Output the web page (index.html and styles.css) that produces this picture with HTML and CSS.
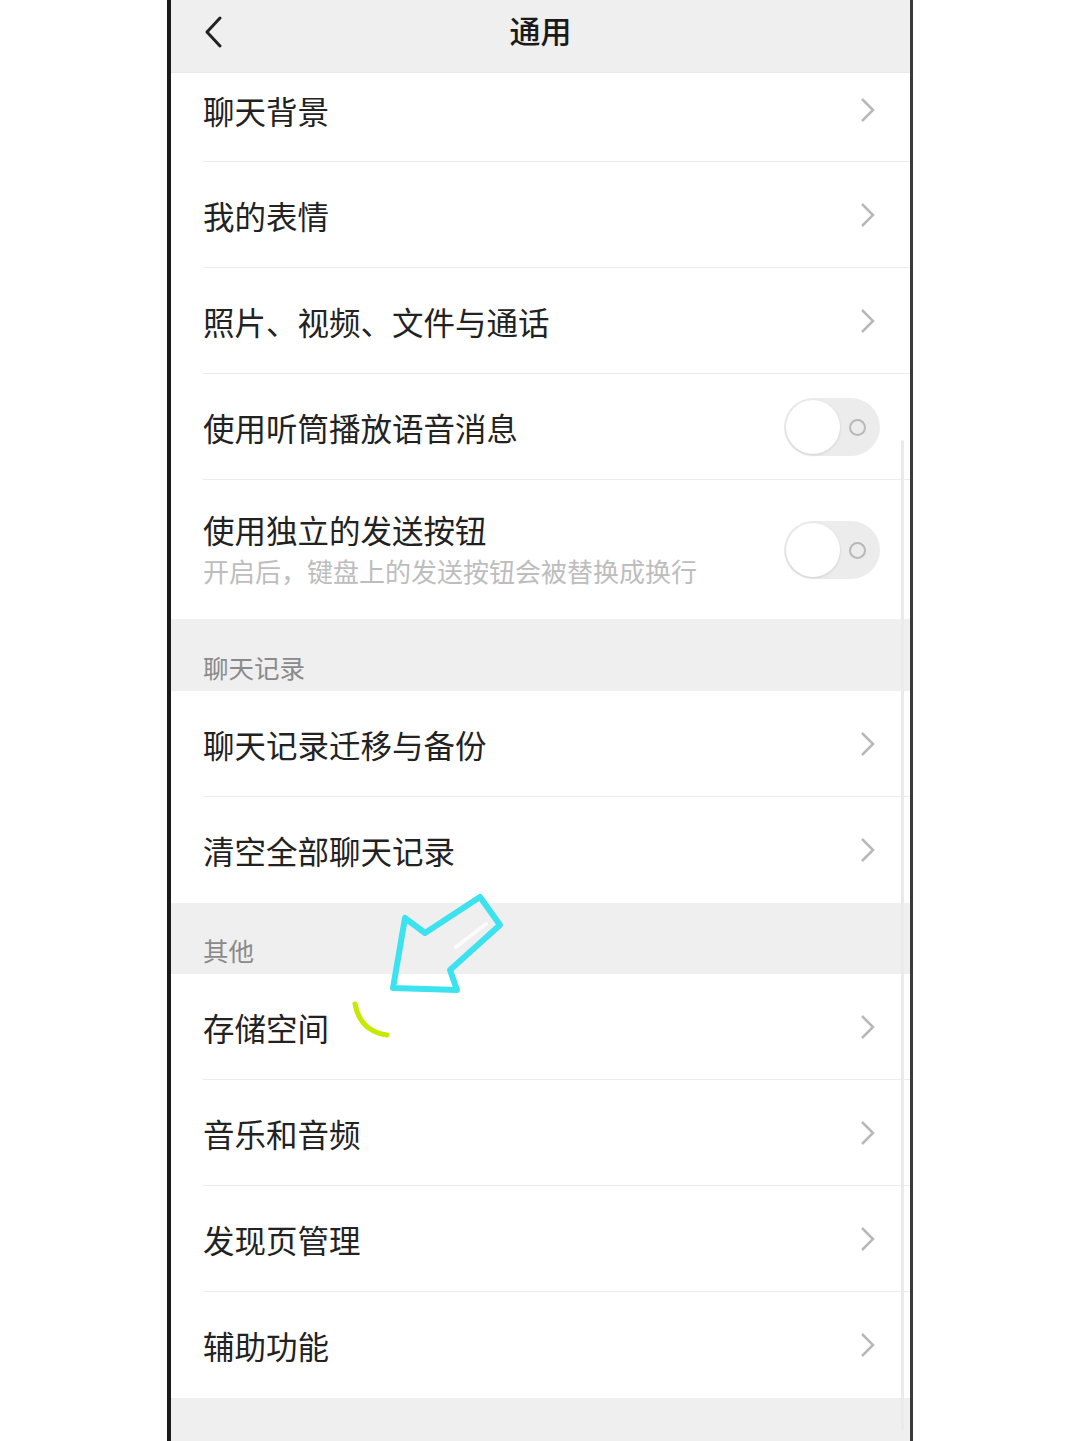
FILE: index.html
```html
<!DOCTYPE html>
<html lang="zh-CN">
<head>
<meta charset="UTF-8">
<meta name="viewport" content="width=device-width, initial-scale=1.0">
<title>通用</title>
<link rel="stylesheet" href="styles.css">
</head>
<body>
  <div class="phone">
    <header class="topbar">
      <svg class="back" width="20" height="32" viewBox="0 0 20 32"><path d="M16 2 L3 16 L16 30" fill="none" stroke="#222" stroke-width="3" stroke-linecap="round" stroke-linejoin="round"/></svg>
      <div class="title">通用</div>
    </header>

    <div class="list">
      <div class="row first"><div class="inner"><span class="label">聊天背景</span><svg class="chev" width="16" height="26" viewBox="0 0 16 26"><path d="M2 2 L13 13 L2 24" fill="none" stroke="#b8b8b8" stroke-width="2.5"/></svg></div></div>
      <div class="row"><div class="inner"><span class="label">我的表情</span><svg class="chev" width="16" height="26" viewBox="0 0 16 26"><path d="M2 2 L13 13 L2 24" fill="none" stroke="#b8b8b8" stroke-width="2.5"/></svg></div></div>
      <div class="row"><div class="inner"><span class="label">照片、视频、文件与通话</span><svg class="chev" width="16" height="26" viewBox="0 0 16 26"><path d="M2 2 L13 13 L2 24" fill="none" stroke="#b8b8b8" stroke-width="2.5"/></svg></div></div>
      <div class="row"><div class="inner"><span class="label">使用听筒播放语音消息</span><div class="toggle"><span class="knob"></span><span class="ring"></span></div></div></div>
      <div class="row tall"><div class="inner last">
        <div class="texts">
          <span class="label">使用独立的发送按钮</span>
          <span class="sub">开启后，键盘上的发送按钮会被替换成换行</span>
        </div>
        <div class="toggle"><span class="knob"></span><span class="ring"></span></div>
      </div></div>
    </div>

    <div class="section">聊天记录</div>
    <div class="list">
      <div class="row"><div class="inner"><span class="label">聊天记录迁移与备份</span><svg class="chev" width="16" height="26" viewBox="0 0 16 26"><path d="M2 2 L13 13 L2 24" fill="none" stroke="#b8b8b8" stroke-width="2.5"/></svg></div></div>
      <div class="row"><div class="inner last"><span class="label">清空全部聊天记录</span><svg class="chev" width="16" height="26" viewBox="0 0 16 26"><path d="M2 2 L13 13 L2 24" fill="none" stroke="#b8b8b8" stroke-width="2.5"/></svg></div></div>
    </div>

    <div class="section short">其他</div>
    <div class="list">
      <div class="row"><div class="inner"><span class="label">存储空间</span><svg class="chev" width="16" height="26" viewBox="0 0 16 26"><path d="M2 2 L13 13 L2 24" fill="none" stroke="#b8b8b8" stroke-width="2.5"/></svg></div></div>
      <div class="row"><div class="inner"><span class="label">音乐和音频</span><svg class="chev" width="16" height="26" viewBox="0 0 16 26"><path d="M2 2 L13 13 L2 24" fill="none" stroke="#b8b8b8" stroke-width="2.5"/></svg></div></div>
      <div class="row"><div class="inner"><span class="label">发现页管理</span><svg class="chev" width="16" height="26" viewBox="0 0 16 26"><path d="M2 2 L13 13 L2 24" fill="none" stroke="#b8b8b8" stroke-width="2.5"/></svg></div></div>
      <div class="row"><div class="inner last"><span class="label">辅助功能</span><svg class="chev" width="16" height="26" viewBox="0 0 16 26"><path d="M2 2 L13 13 L2 24" fill="none" stroke="#b8b8b8" stroke-width="2.5"/></svg></div></div>
    </div>
    <div class="bottom"></div>

    <div class="scrollbar"></div>

    <!-- hand drawn marks on the screenshot -->
    <svg class="marks" width="170" height="160" viewBox="350 885 170 160">
      <path d="M405 918 L393 988 L457 990 L450 970 L500 925 L480 897 L425 933 Z" fill="none" stroke="#3ce3ee" stroke-width="6" stroke-linejoin="round"/>
      <path d="M456 947 L486 924" stroke="#fff" stroke-width="4" stroke-linecap="round" opacity="0.85"/>
      <path d="M355 1004 Q360 1031 387 1035" fill="none" stroke="#c4ea00" stroke-width="5" stroke-linecap="round"/>
    </svg>
  </div>
</body>
</html>
```

FILE: styles.css
```css
body { margin: 0; background: #fff; font-family: "Noto Sans CJK SC", "Noto Sans", sans-serif; color: #1f1f1f; }
.phone { position: relative; width: 739px; height: 1441px; margin: 0 auto; border-left: 4px solid #1a1a1a; border-right: 3px solid #3a3a3a; background: #fff; overflow: hidden; }

.topbar { height: 73px; background: #efefef; border-bottom: 1px solid #e8e8e8; box-sizing: border-box; display: flex; align-items: center; justify-content: center; position: relative; }
.back { position: absolute; left: 33px; top: 16px; }
.title { font-size: 31px; font-weight: 500; color: #1a1a1a; margin-top: -14px; }

.row { padding-left: 32px; height: 106px; box-sizing: border-box; }
.row.first { height: 89px; }
.row.first .inner { padding-bottom: 14px; }
.row.tall { height: 139px; }
.inner { height: 100%; box-sizing: border-box; display: flex; align-items: center; justify-content: space-between; padding-right: 34px; border-bottom: 1px solid #ececec; }
.inner.last { border-bottom: none; }
.label { font-size: 31.5px; line-height: 40px; color: #222; }
.texts { display: flex; flex-direction: column; margin-top: -2px; }
.sub { font-size: 26px; line-height: 34px; color: #bdbdbd; margin-top: 5px; }

.chev { display: block; margin-right: 0; }

.toggle { position: relative; width: 96px; height: 58px; border-radius: 29px; background: #ececec; margin-right: -4px; }
.knob { position: absolute; left: 2px; top: 2px; width: 54px; height: 54px; border-radius: 50%; background: #fff; box-shadow: 0 1px 3px rgba(0,0,0,0.12); }
.ring { position: absolute; left: 65px; top: 21px; width: 13px; height: 13px; border-radius: 50%; border: 2px solid #b8b8b8; }

.section { height: 72px; background: #efefef; padding: 0 32px; font-size: 25.5px; line-height: 34px; color: #8a8a8a; display: flex; align-items: flex-end; padding-bottom: 7px; box-sizing: border-box; }
.section.short { height: 71px; }
.bottom { height: 60px; background: #efefef; }

.scrollbar { position: absolute; right: 6px; top: 440px; width: 3px; height: 990px; background: #eaeaea; border-radius: 2px; }
.marks { position: absolute; left: 179px; top: 885px; }
```
